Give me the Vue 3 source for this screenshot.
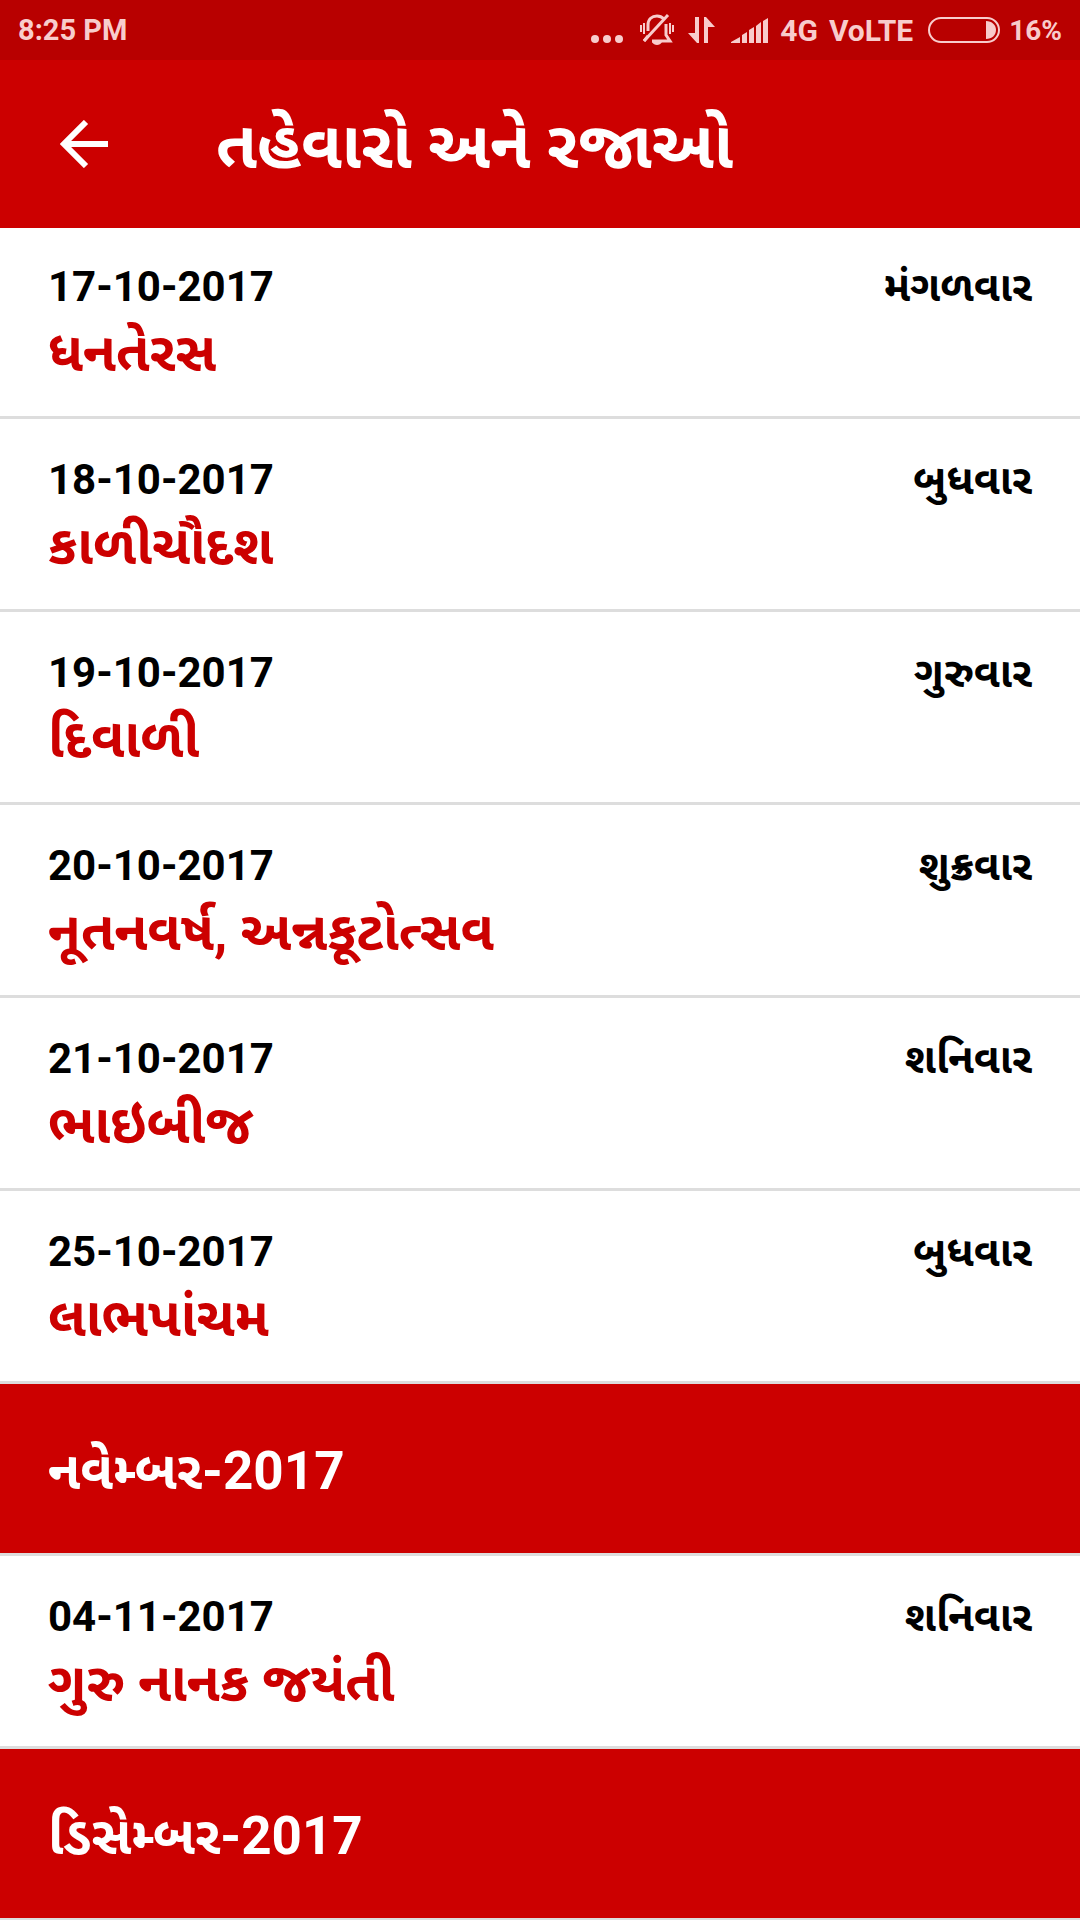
<script setup>
const entries = [
  { date: '17-10-2017', day: 'મંગળવાર', name: 'ધનતેરસ' },
  { date: '18-10-2017', day: 'બુધવાર', name: 'કાળીચૌદશ' },
  { date: '19-10-2017', day: 'ગુરુવાર', name: 'દિવાળી' },
  { date: '20-10-2017', day: 'શુક્રવાર', name: 'નૂતનવર્ષ, અન્નકૂટોત્સવ' },
  { date: '21-10-2017', day: 'શનિવાર', name: 'ભાઇબીજ' },
  { date: '25-10-2017', day: 'બુધવાર', name: 'લાભપાંચમ' },
  { month: 'નવેમ્બર-2017' },
  { date: '04-11-2017', day: 'શનિવાર', name: 'ગુરુ નાનક જયંતી' },
  { month: 'ડિસેમ્બર-2017' },
]
</script>

<template>
  <div class="screen">
    <div class="status">
      <span>8:25 PM</span>
      <div class="indicators">
        <svg width="34" height="32" viewBox="0 0 34 32" fill="currentColor">
          <circle cx="5" cy="25" r="4" /><circle cx="17" cy="25" r="4" /><circle cx="29" cy="25" r="4" />
        </svg>
        <svg class="bell" width="34" height="32" viewBox="0 0 34 32" fill="none" stroke="currentColor" stroke-width="2">
          <path d="M8 17V11C8 5 12 2 17 2c3 0 5 1 7 3M26 10v11l4 6H12M4 27l4-5" stroke-width="3" />
          <path d="M28 1 4 27" stroke-width="3" />
          <path d="M1 11v7M4 9v11M30 9v11M33 11v7" />
          <path d="M12 28h10c-1 2-3 3-5 3s-4-1-5-3z" fill="currentColor" stroke="none" />
        </svg>
        <svg class="data" width="28" height="32" viewBox="0 0 28 32" fill="currentColor">
          <path d="M7 3h4v26H9L0 19h7zM16 3h2l9 10h-7v16h-4z" />
        </svg>
        <svg class="signal" width="38" height="32" viewBox="0 0 38 32" fill="currentColor">
          <path d="M0 29v-1l9-5v6zM11 21l5-3v11h-5zM18 16l5-3v16h-5zM25 12l5-4v21h-5zM32 7l5-3v25h-5z" />
        </svg>
        <span class="net">4G</span>
        <span class="volte">VoLTE</span>
        <svg class="battery" width="72" height="32" viewBox="0 0 72 32" fill="none" stroke="currentColor" stroke-width="2">
          <rect x="1" y="4" width="70" height="24" rx="12" />
          <path d="M58 7c6 0 10 4 10 9s-4 9-10 9z" fill="currentColor" stroke="none" />
        </svg>
        <span class="percent">16%</span>
      </div>
    </div>
    <header class="bar">
      <button class="back" aria-label="Back">
        <svg width="48" height="48" viewBox="0 0 48 48" fill="none" stroke="currentColor" stroke-width="6">
          <path d="M48 24H4M26 2 4 24l22 22" />
        </svg>
      </button>
      <h1>તહેવારો અને રજાઓ</h1>
    </header>
    <main>
      <div class="list">
        <template v-for="e in entries" :key="e.date || e.month">
          <h2 v-if="e.month">{{ e.month }}</h2>
          <article v-else>
            <div class="top"><time>{{ e.date }}</time><span>{{ e.day }}</span></div>
            <div class="name">{{ e.name }}</div>
          </article>
        </template>
      </div>
    </main>
  </div>
</template>

<style>
body { margin: 0; background: #fff; }
</style>

<style scoped>
.screen {
  height: 100vh;
  display: flex;
  flex-direction: column;
  font-family: Roboto, "Noto Sans Gujarati", "Noto Sans", sans-serif;
  font-weight: 700;
}
.status {
  flex: none;
  height: 60px;
  background: #b80000;
  color: #f8cccc;
  display: flex;
  justify-content: space-between;
  align-items: center;
  padding: 0 18px;
  font-size: 29px;
}
.indicators { display: flex; align-items: center; }
.bell { margin-left: 16px; }
.data { margin-left: 14px; }
.signal { margin-left: 15px; }
.net { margin: 0 11px; }
.net, .volte { font-size: 30px; }
.battery { margin-left: 15px; }
.percent { margin-left: 9px; font-size: 28px; }
.bar {
  flex: none;
  height: 168px;
  background: #c00;
  color: #fff;
  display: flex;
  align-items: center;
}
.back {
  margin: 0 108px 0 60px;
  padding: 0;
  border: 0;
  background: none;
  color: inherit;
  display: flex;
}
h1 { margin: 0; padding-top: 4px; font-size: 66px; line-height: 90px; }
main { flex: 1; min-height: 0; overflow: hidden; }
.list { margin-top: -2px; }
article {
  box-sizing: border-box;
  height: 193px;
  border-bottom: 3px solid #ddd;
  padding: 31px 48px 0;
}
.top {
  display: flex;
  justify-content: space-between;
  font-size: 42px;
  line-height: 60px;
}
.name { color: #c00; font-size: 54px; line-height: 72px; }
h2 {
  box-sizing: border-box;
  margin: 0;
  height: 172px;
  padding: 14px 48px 0;
  border-bottom: 3px solid #ddd;
  display: flex;
  align-items: center;
  background: #c00;
  color: #fff;
  font-size: 53px;
}
</style>
